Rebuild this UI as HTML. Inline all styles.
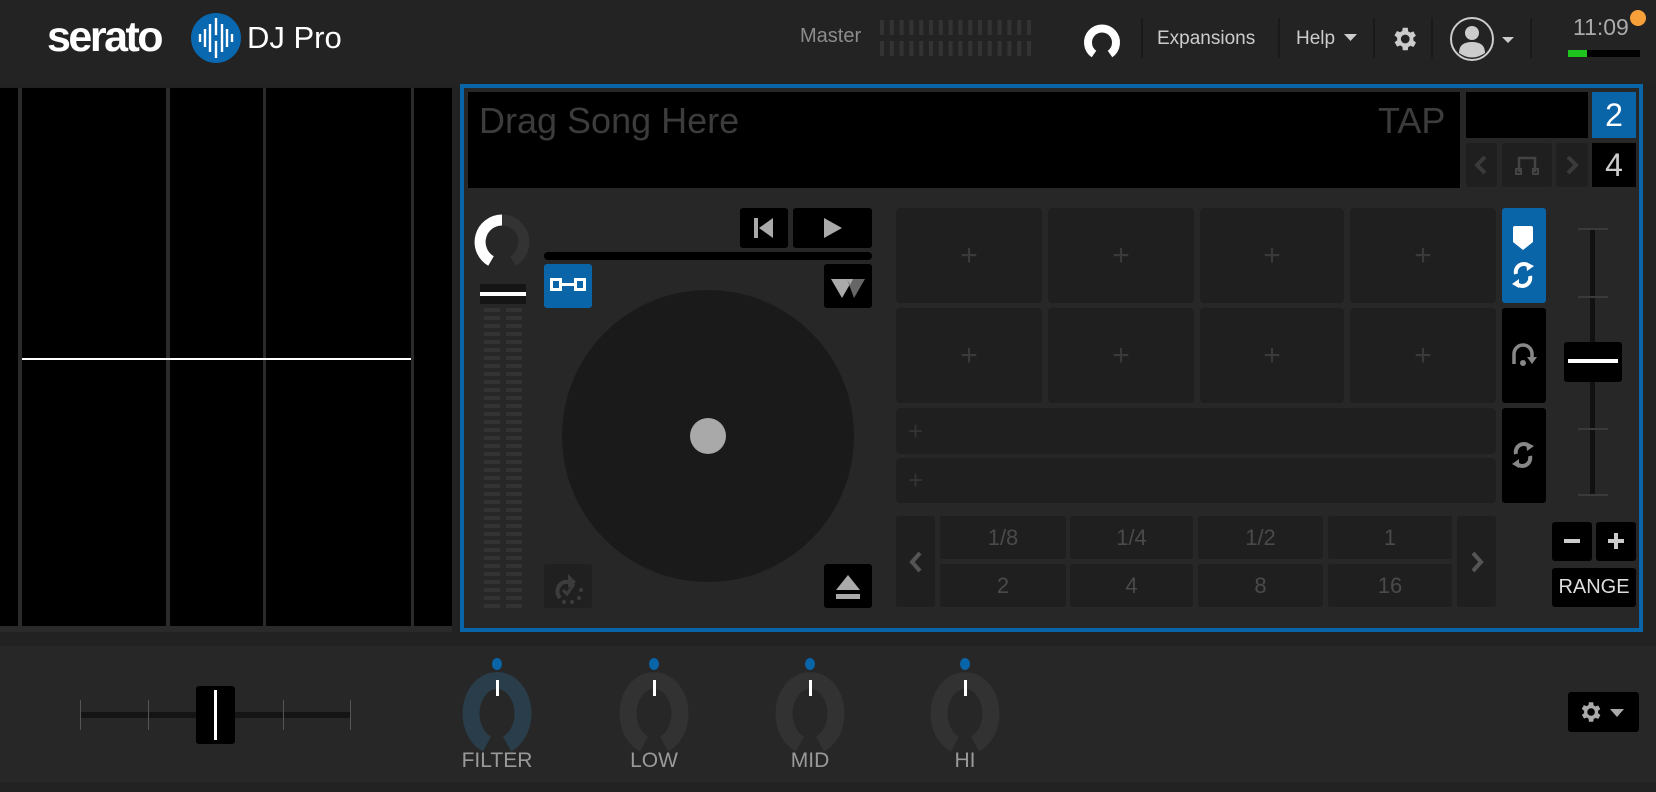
<!DOCTYPE html>
<html><head><meta charset="utf-8"><style>
*{margin:0;padding:0;box-sizing:border-box}
body{width:1656px;height:792px;background:#222;position:relative;overflow:hidden;font-family:"Liberation Sans",sans-serif}
.a{position:absolute}
.blk{background:#000}
.pad{position:absolute;background:#1f1f1f;border-radius:4px;color:#3a3a3a;font-size:30px;display:flex;align-items:center;justify-content:center}
.bj{position:absolute;background:#1f1f1f;border-radius:3px;color:#4a4a4a;font-size:22px;display:flex;align-items:center;justify-content:center}
.lab{position:absolute;color:#9a9a9a;font-size:21px;width:120px;text-align:center}
</style></head><body>
<!-- header -->
<div class="a" style="left:0;top:0;width:1656px;height:84px;background:#232323"></div>
<div class="a" style="left:47px;top:13px;font-size:43px;font-weight:bold;color:#fff;letter-spacing:-2.5px">serato</div>
<svg class="a" style="left:190px;top:12px" width="52" height="52"><circle cx="26" cy="26" r="25" fill="#0a68b0"/><g stroke="#fff" stroke-width="2.4"><line x1="10" y1="22" x2="10" y2="30"/><line x1="15" y1="17" x2="15" y2="35"/><line x1="20" y1="12" x2="20" y2="40"/><line x1="26" y1="6" x2="26" y2="46"/><line x1="32" y1="12" x2="32" y2="40"/><line x1="37" y1="17" x2="37" y2="35"/><line x1="42" y1="22" x2="42" y2="30"/></g><circle cx="26" cy="26" r="3" fill="#0a68b0"/></svg>
<div class="a" style="left:247px;top:20px;font-size:31px;color:#fff">DJ Pro</div>
<div class="a" style="left:800px;top:25px;font-size:20px;color:#8c8c8c">Master</div>
<svg class="a" style="left:880px;top:20px" width="158" height="37"><g fill="#333">
<rect x="0" y="0" width="4" height="15"/><rect x="9.8" y="0" width="4" height="15"/><rect x="19.6" y="0" width="4" height="15"/><rect x="29.4" y="0" width="4" height="15"/><rect x="39.2" y="0" width="4" height="15"/><rect x="49" y="0" width="4" height="15"/><rect x="58.8" y="0" width="4" height="15"/><rect x="68.6" y="0" width="4" height="15"/><rect x="78.4" y="0" width="4" height="15"/><rect x="88.2" y="0" width="4" height="15"/><rect x="98" y="0" width="4" height="15"/><rect x="107.8" y="0" width="4" height="15"/><rect x="117.6" y="0" width="4" height="15"/><rect x="127.4" y="0" width="4" height="15"/><rect x="137.2" y="0" width="4" height="15"/><rect x="147" y="0" width="4" height="15"/>
<rect x="0" y="21" width="4" height="15"/><rect x="9.8" y="21" width="4" height="15"/><rect x="19.6" y="21" width="4" height="15"/><rect x="29.4" y="21" width="4" height="15"/><rect x="39.2" y="21" width="4" height="15"/><rect x="49" y="21" width="4" height="15"/><rect x="58.8" y="21" width="4" height="15"/><rect x="68.6" y="21" width="4" height="15"/><rect x="78.4" y="21" width="4" height="15"/><rect x="88.2" y="21" width="4" height="15"/><rect x="98" y="21" width="4" height="15"/><rect x="107.8" y="21" width="4" height="15"/><rect x="117.6" y="21" width="4" height="15"/><rect x="127.4" y="21" width="4" height="15"/><rect x="137.2" y="21" width="4" height="15"/><rect x="147" y="21" width="4" height="15"/></g></svg>
<svg class="a" style="left:1083px;top:20px" width="38" height="38"><path d="M11 34 A14 14 0 1 1 27 34" fill="none" stroke="#fff" stroke-width="8"/></svg>
<div class="a" style="left:1141px;top:18px;width:2px;height:40px;background:#1a1a1a"></div>
<div class="a" style="left:1157px;top:28px;font-size:19px;color:#ccc">Expansions</div>
<div class="a" style="left:1278px;top:18px;width:2px;height:40px;background:#1a1a1a"></div>
<div class="a" style="left:1296px;top:28px;font-size:19px;color:#ccc">Help</div>
<svg class="a" style="left:1344px;top:34px" width="14" height="8"><path d="M0 0H13L6.5 7Z" fill="#ccc"/></svg>
<div class="a" style="left:1373px;top:18px;width:2px;height:40px;background:#1a1a1a"></div>
<svg class="a" style="left:1389px;top:24px" width="30" height="30" viewBox="0 0 24 24"><path fill="#ccc" d="M19.4 13a7.5 7.5 0 0 0 0-2l2.1-1.6-2-3.5-2.5 1a7 7 0 0 0-1.7-1L15 3h-4l-.4 2.6a7 7 0 0 0-1.7 1l-2.5-1-2 3.5L6.6 11a7.5 7.5 0 0 0 0 2l-2.1 1.6 2 3.5 2.5-1a7 7 0 0 0 1.7 1L11 21h4l.4-2.6a7 7 0 0 0 1.7-1l2.5 1 2-3.5zM13 15.5a3.5 3.5 0 1 1 0-7 3.5 3.5 0 0 1 0 7z"/></svg>
<div class="a" style="left:1431px;top:18px;width:2px;height:40px;background:#1a1a1a"></div>
<svg class="a" style="left:1449px;top:16px" width="46" height="46"><circle cx="23" cy="23" r="21" fill="none" stroke="#ccc" stroke-width="2"/><circle cx="23" cy="17" r="7" fill="#ccc"/><path d="M10 37 Q10 26 23 26 Q36 26 36 37 Q23 46 10 37Z" fill="#ccc"/></svg>
<svg class="a" style="left:1502px;top:37px" width="12" height="7"><path d="M0 0H12L6 6Z" fill="#ccc"/></svg>
<div class="a" style="left:1530px;top:18px;width:2px;height:40px;background:#1a1a1a"></div>
<div class="a" style="left:1573px;top:14px;font-size:23px;color:#aaa">11:09</div>
<div class="a" style="left:1630px;top:10px;width:16px;height:16px;border-radius:50%;background:#f7a03a"></div>
<div class="a" style="left:1568px;top:50px;width:72px;height:7px;background:#000"></div>
<div class="a" style="left:1568px;top:50px;width:19px;height:7px;background:#1ec31e"></div>
<!-- left waveform -->
<div class="a" style="left:0;top:88px;width:452px;height:544px;background:#2a2a2a"></div>
<div class="a blk" style="left:0;top:88px;width:18px;height:538px"></div>
<div class="a blk" style="left:22px;top:88px;width:144px;height:538px"></div>
<div class="a blk" style="left:170px;top:88px;width:93px;height:538px"></div>
<div class="a blk" style="left:266px;top:88px;width:145px;height:538px"></div>
<div class="a blk" style="left:414px;top:88px;width:38px;height:538px"></div>
<div class="a" style="left:22px;top:358px;width:389px;height:2px;background:#fff"></div>
<!-- deck -->
<div class="a" style="left:460px;top:84px;width:1183px;height:548px;border:4px solid #0a64a8;background:#272727"></div>
<div class="a blk" style="left:468px;top:92px;width:992px;height:96px"></div>
<div class="a" style="left:479px;top:100px;font-size:36px;color:#3c3c3c">Drag Song Here</div>
<div class="a" style="left:1378px;top:100px;font-size:36px;color:#3c3c3c">TAP</div>
<div class="a blk" style="left:1466px;top:92px;width:122px;height:46px"></div>
<div class="a" style="left:1466px;top:143px;width:31px;height:44px;background:#1f1f1f;border-radius:3px"></div>
<svg class="a" style="left:1474px;top:155px" width="14" height="20"><path d="M11 2L3 10L11 18" fill="none" stroke="#3a3a3a" stroke-width="4"/></svg>
<div class="a" style="left:1502px;top:143px;width:50px;height:44px;background:#1f1f1f;border-radius:3px"></div>
<svg class="a" style="left:1515px;top:154px" width="24" height="22"><path d="M4 18V4H20V18" fill="none" stroke="#444" stroke-width="2.5"/><rect x="1" y="15" width="5" height="5" fill="none" stroke="#444" stroke-width="2"/><rect x="18" y="15" width="5" height="5" fill="none" stroke="#444" stroke-width="2"/></svg>
<div class="a" style="left:1556px;top:143px;width:32px;height:44px;background:#1f1f1f;border-radius:3px"></div>
<svg class="a" style="left:1565px;top:155px" width="14" height="20"><path d="M3 2L11 10L3 18" fill="none" stroke="#3a3a3a" stroke-width="4"/></svg>
<div class="a" style="left:1592px;top:92px;width:44px;height:46px;background:#0a64a8;color:#fff;font-size:32px;text-align:center;line-height:46px">2</div>
<div class="a blk" style="left:1592px;top:143px;width:44px;height:44px;color:#ccc;font-size:32px;text-align:center;line-height:44px">4</div>
<!-- left knob + meter -->
<svg class="a" style="left:472px;top:212px" width="60" height="60"><path d="M19 49 A22 22 0 0 1 30 8" fill="none" stroke="#fff" stroke-width="11"/><path d="M30 8 A22 22 0 0 1 41 49" fill="none" stroke="#333" stroke-width="11"/></svg>
<div class="a" style="left:480px;top:284px;width:46px;height:20px;background:#151515"></div>
<div class="a" style="left:480px;top:292px;width:46px;height:4px;background:#fff"></div>
<div class="a" style="left:484px;top:308px;width:16px;height:300px;background:repeating-linear-gradient(#333 0 4px,transparent 4px 8px)"></div>
<div class="a" style="left:506px;top:308px;width:16px;height:300px;background:repeating-linear-gradient(#333 0 4px,transparent 4px 8px)"></div>
<!-- transport -->
<div class="a blk" style="left:740px;top:208px;width:48px;height:40px;border-radius:3px"></div>
<svg class="a" style="left:754px;top:218px" width="20" height="20"><rect x="0" y="0" width="4" height="20" fill="#aaa"/><path d="M19 0V20L5 10Z" fill="#aaa"/></svg>
<div class="a blk" style="left:793px;top:208px;width:79px;height:40px;border-radius:3px"></div>
<svg class="a" style="left:823px;top:218px" width="20" height="20"><path d="M1 0V20L19 10Z" fill="#aaa"/></svg>
<div class="a blk" style="left:544px;top:252px;width:328px;height:8px;border-radius:4px"></div>
<div class="a" style="left:544px;top:264px;width:48px;height:44px;background:#0a64a8;border-radius:3px"></div>
<svg class="a" style="left:550px;top:278px" width="36" height="14"><rect x="1.5" y="1.5" width="9" height="10" fill="none" stroke="#fff" stroke-width="3"/><rect x="25.5" y="1.5" width="9" height="10" fill="none" stroke="#fff" stroke-width="3"/><rect x="10" y="5" width="16" height="3" fill="#fff"/></svg>
<div class="a blk" style="left:824px;top:264px;width:48px;height:44px;border-radius:3px"></div>
<svg class="a" style="left:831px;top:277px" width="36" height="22"><path d="M0 2H22L11 21Z" fill="#aaa"/><path d="M16 2H34L23 21Z" fill="#666"/><path d="M16 2H22L19 8Z" fill="#aaa"/></svg>
<div class="a" style="left:562px;top:290px;width:292px;height:292px;border-radius:50%;background:#1a1a1a"></div>
<div class="a" style="left:690px;top:418px;width:36px;height:36px;border-radius:50%;background:#a9a9a9"></div>
<div class="a" style="left:544px;top:564px;width:48px;height:44px;background:#202020;border-radius:3px"></div>
<svg class="a" style="left:550px;top:568px" width="36" height="38"><path d="M10 30 A10 10 0 0 1 14 14 L20 14" fill="none" stroke="#3c3c3c" stroke-width="4"/><path d="M18 6L26 14L18 20Z" fill="#3c3c3c"/><path d="M13 22L17 26L24 16" fill="none" stroke="#3c3c3c" stroke-width="3"/><circle cx="31" cy="22" r="2" fill="#3c3c3c"/><circle cx="29" cy="30" r="2" fill="#3c3c3c"/><circle cx="22" cy="34" r="2" fill="#3c3c3c"/><circle cx="14" cy="34" r="2" fill="#3c3c3c"/></svg>
<div class="a blk" style="left:824px;top:564px;width:48px;height:44px;border-radius:3px"></div>
<svg class="a" style="left:836px;top:575px" width="24" height="24"><path d="M12 0L24 15H0Z" fill="#aaa"/><rect x="0" y="19" width="24" height="5" fill="#aaa"/></svg>
<!-- pads -->
<div class="pad" style="left:896px;top:208px;width:146px;height:95px">+</div>
<div class="pad" style="left:1048px;top:208px;width:146px;height:95px">+</div>
<div class="pad" style="left:1200px;top:208px;width:144px;height:95px">+</div>
<div class="pad" style="left:1350px;top:208px;width:146px;height:95px">+</div>
<div class="pad" style="left:896px;top:308px;width:146px;height:95px">+</div>
<div class="pad" style="left:1048px;top:308px;width:146px;height:95px">+</div>
<div class="pad" style="left:1200px;top:308px;width:144px;height:95px">+</div>
<div class="pad" style="left:1350px;top:308px;width:146px;height:95px">+</div>
<div class="pad" style="left:896px;top:408px;width:600px;height:46px;justify-content:flex-start;padding-left:12px;font-size:26px;color:#333">+</div>
<div class="pad" style="left:896px;top:458px;width:600px;height:45px;justify-content:flex-start;padding-left:12px;font-size:26px;color:#333">+</div>
<div class="a" style="left:1502px;top:208px;width:44px;height:95px;background:#0a64a8;border-radius:3px"></div>
<svg class="a" style="left:1510px;top:224px" width="28" height="64"><path d="M3 4Q3 2 5 2H21Q23 2 23 4V18L13 26L3 18Z" fill="#fff"/><path d="M6 50A8 8 0 0 1 19 42M20 52A8 8 0 0 1 7 60" fill="none" stroke="#fff" stroke-width="4"/><path d="M16 38L24 42L17 47Z" fill="#fff"/><path d="M9 55L2 60L9 64Z" fill="#fff"/></svg>
<div class="a blk" style="left:1502px;top:308px;width:44px;height:95px;border-radius:3px"></div>
<svg class="a" style="left:1510px;top:340px" width="28" height="30"><path d="M4 24V14A9 9 0 0 1 22 14V18" fill="none" stroke="#888" stroke-width="3.5"/><path d="M17 17H27L22 24Z" fill="#888"/><circle cx="13" cy="23" r="3" fill="#888"/></svg>
<div class="a blk" style="left:1502px;top:408px;width:44px;height:95px;border-radius:3px"></div>
<svg class="a" style="left:1510px;top:440px" width="28" height="32"><path d="M6 14A8 8 0 0 1 19 6M20 16A8 8 0 0 1 7 24" fill="none" stroke="#888" stroke-width="4"/><path d="M16 2L24 6L17 11Z" fill="#888"/><path d="M9 19L2 24L9 28Z" fill="#888"/></svg>
<!-- pitch -->
<div class="a" style="left:1590px;top:229px;width:5px;height:266px;background:#111"></div>
<div class="a" style="left:1578px;top:228px;width:30px;height:2px;background:#3a3a3a"></div>
<div class="a" style="left:1578px;top:296px;width:30px;height:2px;background:#3a3a3a"></div>
<div class="a" style="left:1578px;top:428px;width:30px;height:2px;background:#3a3a3a"></div>
<div class="a" style="left:1578px;top:494px;width:30px;height:2px;background:#3a3a3a"></div>
<div class="a blk" style="left:1564px;top:342px;width:58px;height:40px;border-radius:3px"></div>
<div class="a" style="left:1568px;top:359px;width:50px;height:4px;background:#fff"></div>
<!-- beat jump -->
<div class="bj" style="left:896px;top:516px;width:39px;height:91px"><svg width="14" height="22"><path d="M11 2L3 11L11 20" fill="none" stroke="#555" stroke-width="4"/></svg></div>
<div class="bj" style="left:940px;top:516px;width:126px;height:43px">1/8</div>
<div class="bj" style="left:1070px;top:516px;width:123px;height:43px">1/4</div>
<div class="bj" style="left:1198px;top:516px;width:125px;height:43px">1/2</div>
<div class="bj" style="left:1328px;top:516px;width:124px;height:43px">1</div>
<div class="bj" style="left:940px;top:564px;width:126px;height:43px">2</div>
<div class="bj" style="left:1070px;top:564px;width:123px;height:43px">4</div>
<div class="bj" style="left:1198px;top:564px;width:125px;height:43px">8</div>
<div class="bj" style="left:1328px;top:564px;width:124px;height:43px">16</div>
<div class="bj" style="left:1457px;top:516px;width:39px;height:91px"><svg width="14" height="22"><path d="M3 2L11 11L3 20" fill="none" stroke="#555" stroke-width="4"/></svg></div>
<div class="a blk" style="left:1552px;top:522px;width:40px;height:39px;border-radius:3px"></div>
<div class="a" style="left:1564px;top:539px;width:16px;height:4px;background:#ccc"></div>
<div class="a blk" style="left:1596px;top:522px;width:40px;height:39px;border-radius:3px"></div>
<div class="a" style="left:1608px;top:539px;width:16px;height:4px;background:#ccc"></div>
<div class="a" style="left:1614px;top:533px;width:4px;height:16px;background:#ccc"></div>
<div class="a blk" style="left:1552px;top:568px;width:84px;height:39px;border-radius:3px;color:#ddd;font-size:20px;text-align:center;line-height:39px">RANGE</div>
<!-- mixer -->
<div class="a" style="left:0;top:646px;width:1656px;height:136px;background:#272727"></div>
<div class="a" style="left:80px;top:712px;width:270px;height:6px;background:#151515"></div>
<div class="a" style="left:80px;top:700px;width:1px;height:30px;background:#555"></div>
<div class="a" style="left:148px;top:700px;width:1px;height:30px;background:#555"></div>
<div class="a" style="left:283px;top:700px;width:1px;height:30px;background:#555"></div>
<div class="a" style="left:350px;top:700px;width:1px;height:30px;background:#555"></div>
<div class="a blk" style="left:196px;top:686px;width:39px;height:58px;border-radius:3px"></div>
<div class="a" style="left:214px;top:690px;width:3px;height:50px;background:#fff"></div>
<svg class="a" style="left:0;top:646px" width="1100" height="136">
<g fill="#0a64a8"><ellipse cx="497" cy="18" rx="5" ry="6"/><ellipse cx="654" cy="18" rx="5" ry="6"/><ellipse cx="810" cy="18" rx="5" ry="6"/><ellipse cx="965" cy="18" rx="5" ry="6"/></g>
<g fill="none" stroke-width="17">
<path d="M487 98 A26 33 0 1 1 507 98" stroke="#2a3d4a"/>
<path d="M644 98 A26 33 0 1 1 664 98" stroke="#323232"/>
<path d="M800 98 A26 33 0 1 1 820 98" stroke="#323232"/>
<path d="M955 98 A26 33 0 1 1 975 98" stroke="#323232"/>
</g>
<g fill="#fff"><rect x="496" y="34" width="3" height="16"/><rect x="653" y="34" width="3" height="16"/><rect x="809" y="34" width="3" height="16"/><rect x="964" y="34" width="3" height="16"/></g>
</svg>
<div class="lab" style="left:437px;top:749px">FILTER</div>
<div class="lab" style="left:594px;top:749px">LOW</div>
<div class="lab" style="left:750px;top:749px">MID</div>
<div class="lab" style="left:905px;top:749px">HI</div>
<div class="a blk" style="left:1568px;top:692px;width:71px;height:40px;border-radius:3px"></div>
<svg class="a" style="left:1577px;top:699px" width="26" height="26" viewBox="0 0 24 24"><path fill="#aaa" d="M19.4 13a7.5 7.5 0 0 0 0-2l2.1-1.6-2-3.5-2.5 1a7 7 0 0 0-1.7-1L15 3h-4l-.4 2.6a7 7 0 0 0-1.7 1l-2.5-1-2 3.5L6.6 11a7.5 7.5 0 0 0 0 2l-2.1 1.6 2 3.5 2.5-1a7 7 0 0 0 1.7 1L11 21h4l.4-2.6a7 7 0 0 0 1.7-1l2.5 1 2-3.5zM13 15.5a3.5 3.5 0 1 1 0-7 3.5 3.5 0 0 1 0 7z"/></svg>
<svg class="a" style="left:1610px;top:709px" width="14" height="8"><path d="M0 0H14L7 8Z" fill="#aaa"/></svg>
</body></html>
